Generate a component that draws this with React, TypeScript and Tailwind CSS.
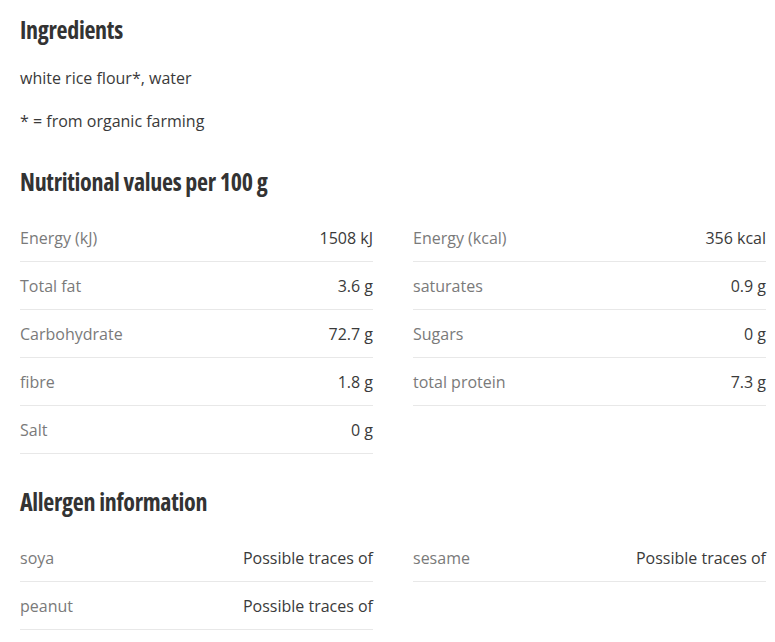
import React from "react";

type Row = { label: string; value: string };

const nutritionLeft: Row[] = [
  { label: "Energy (kJ)", value: "1508 kJ" },
  { label: "Total fat", value: "3.6 g" },
  { label: "Carbohydrate", value: "72.7 g" },
  { label: "fibre", value: "1.8 g" },
  { label: "Salt", value: "0 g" },
];

const nutritionRight: Row[] = [
  { label: "Energy (kcal)", value: "356 kcal" },
  { label: "saturates", value: "0.9 g" },
  { label: "Sugars", value: "0 g" },
  { label: "total protein", value: "7.3 g" },
];

const allergenLeft: Row[] = [
  { label: "soya", value: "Possible traces of" },
  { label: "peanut", value: "Possible traces of" },
];

const allergenRight: Row[] = [{ label: "sesame", value: "Possible traces of" }];

function Heading({ children }: { children: React.ReactNode }) {
  return (
    <h2 className="text-[24px] leading-8 font-bold text-[#333333] font-['Open_Sans',sans-serif] font-stretch-[75%] tracking-[-0.3px]">
      {children}
    </h2>
  );
}

function Table({ rows }: { rows: Row[] }) {
  return (
    <div className="flex flex-col">
      {rows.map((r) => (
        <div
          key={r.label}
          className="flex h-12 items-center justify-between border-b border-[#e8e8e8]"
        >
          <span className="text-[#7a7a7a]">{r.label}</span>
          <span className="text-[#3a3a3a]">{r.value}</span>
        </div>
      ))}
    </div>
  );
}

export default function App() {
  return (
    <div className="min-h-screen bg-white pl-5 pr-[9px] pt-[14px] font-['Open_Sans',sans-serif] text-[16px]">
      <Heading>Ingredients</Heading>
      <p className="mt-5 leading-6 text-[#3a3a3a]">white rice flour*, water</p>
      <p className="mt-[19px] leading-6 text-[#3a3a3a]">* = from organic farming</p>

      <div className="mt-[33px]">
        <Heading>Nutritional values per 100 g</Heading>
      </div>
      <div className="mt-4 grid grid-cols-2 gap-x-10">
        <Table rows={nutritionLeft} />
        <Table rows={nutritionRight} />
      </div>

      <div className="mt-8">
        <Heading>Allergen information</Heading>
      </div>
      <div className="mt-4 grid grid-cols-2 gap-x-10">
        <Table rows={allergenLeft} />
        <Table rows={allergenRight} />
      </div>
    </div>
  );
}
